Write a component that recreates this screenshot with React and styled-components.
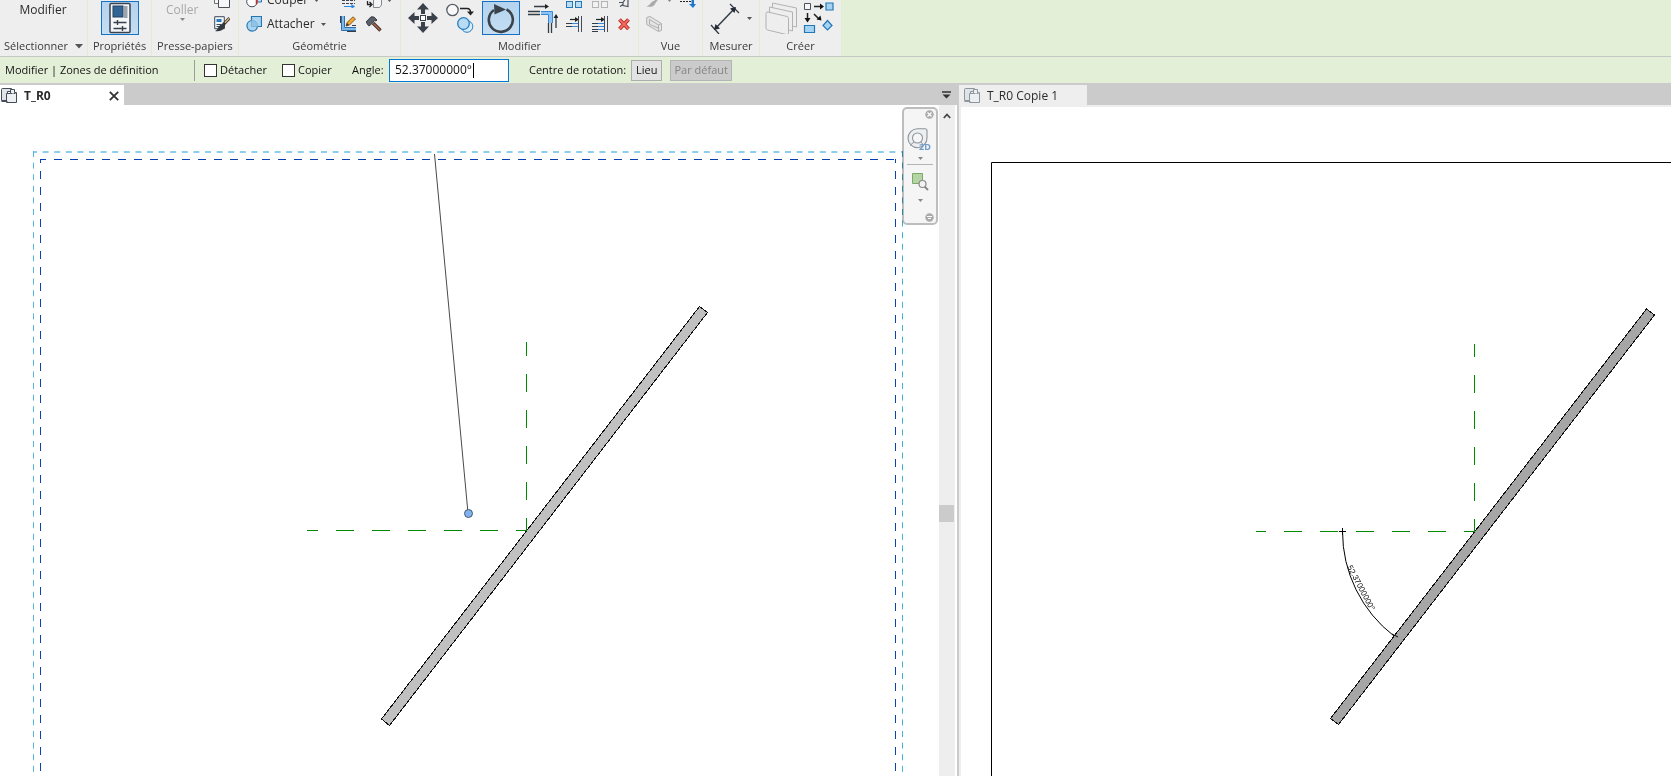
import { useState } from "react";
import styled, { createGlobalStyle } from "styled-components";

const GlobalStyle = createGlobalStyle`
* {
    box-sizing: border-box;
}
body {
    margin: 0;
    overflow: hidden;
    font-family: "Open Sans", "Noto Sans", sans-serif;
    font-size: 11px;
    line-height: 16px;
    color: #2b2b2b;
}
button, input {
    font: inherit;
    color: inherit;
}
svg {
    flex-shrink: 0;
}
`
const Window = styled.div`
height: 100vh;
display: flex;
flex-direction: column;
background: #fff;
`

/* ribbon */
const Ribbon = styled.header`
display: flex;
height: 57px;
flex: none;
overflow: hidden;
background: #e4efd8;
border-bottom: 1px solid #c6c9c3;
`
const Panel = styled.section`
width: ${props => props.$width}px;
display: flex;
flex-direction: column;
background: #eeeeee;
border-right: 1px solid #e2ecd2;
`
const PanelBody = styled.div`
height: 36px;
display: flex;
align-items: flex-end;
justify-content: ${props => props.$center ? 'center' : 'flex-start'};
gap: ${props => props.$gap || 0}px;
padding-left: ${props => props.$left || 0}px;
overflow: hidden;
`
const PanelTitle = styled.div`
height: 20px;
display: flex;
align-items: center;
justify-content: center;
gap: 7px;
white-space: nowrap;
color: #3a3a3a;
`
const Columns = styled.div`
display: flex;
gap: 10px;
`
const Column = styled.div`
display: flex;
flex-direction: column;
align-items: flex-start;
`
const NamedColumn = styled(Column)`
margin-right: 4px;
`
const Tool = styled.button`
height: 24px;
display: flex;
align-items: center;
gap: 5px;
padding: 0;
border: 0;
background: none;
white-space: nowrap;
&:disabled {
    color: #a8a8a8;
}
`
const ToolName = styled.span`
margin-right: 1px;
font-size: 12px;
`
const BigTool = styled(Tool)`
height: 36px;
flex-direction: column;
gap: 0;
justify-content: ${props => props.$text ? 'flex-start' : 'center'};
padding-top: ${props => props.$text ? 2 : 0}px;
`
const ActiveTool = styled(BigTool)`
width: 38px;
height: 34px;
margin-bottom: 1px;
border: 1px solid #1471c4;
background: linear-gradient(#b4d3ee, #c5def3);
`
const MeasureTool = styled(Tool)`
height: 36px;
gap: 7px;
`

/* options bar */
const Options = styled.div`
height: 26px;
flex: none;
display: flex;
align-items: center;
padding-left: 5px;
background: #e4efd8;
color: #111;
white-space: nowrap;
`
const Context = styled.span`
width: 189px;
`
const Rule = styled.span`
width: 1px;
height: 21px;
margin-right: 9px;
background: #9a9f95;
`
const Check = styled.label`
width: ${props => props.$width}px;
display: flex;
align-items: center;
gap: 3px;
`
const Box = styled.input`
appearance: none;
width: 13px;
height: 13px;
margin: 0;
border: 1px solid #333;
background: #fff;
&:checked {
    box-shadow: inset 0 0 0 2px #fff;
    background: #333;
}
`
const AngleLabel = styled.label`
width: 37px;
`
const Field = styled.div`
width: 120px;
height: 23px;
display: flex;
align-items: center;
margin-right: 20px;
padding-left: 5px;
border: 1px solid #0078d7;
background: #fff;
`
const AngleInput = styled.input`
width: 78px;
padding: 0;
border: 0;
outline: 0;
background: none;
font-size: 12px;
`
const TextCursor = styled.span`
width: 1px;
height: 15px;
background: #000;
`
const Center = styled.span`
width: 102px;
`
const Push = styled.button`
height: 21px;
margin-right: 8px;
padding: 0 4px;
border: 1px solid #adadad;
background: #e2e2e2;
&:disabled {
    padding: 0 3px;
    background: #cbcbcb;
    border-color: #b4b4b4;
    color: #848484;
}
`

/* views */
const Views = styled.main`
flex: 1;
min-height: 0;
display: grid;
grid-template-columns: minmax(0, 957fr) minmax(0, 714fr);
`
const View = styled.section`
display: flex;
flex-direction: column;
min-width: 0;
`
const SecondView = styled(View)`
border-left: 2px solid #cbcbcb;
`
const Tabs = styled.div`
height: 22px;
flex: none;
display: flex;
justify-content: space-between;
align-items: center;
padding-top: 2px;
background: #cbcbcb;
`
const Tab = styled.div`
width: ${props => props.$active ? 124 : 128}px;
height: 20px;
display: flex;
align-items: center;
gap: 7px;
padding: 2px 5px 0 ${props => props.$active ? 1 : 5}px;
background: ${props => props.$active ? '#fff' : '#eeeeee'};
font-size: 12px;
font-weight: ${props => props.$active ? 700 : 400};
`
const TabName = styled.span`
flex: 1;
`
const IconButton = styled.button`
display: flex;
padding: 0;
border: 0;
background: none;
`
const TabMenu = styled(IconButton)`
margin-right: 6px;
`
const Body = styled.div`
flex: 1;
min-height: 0;
display: flex;
position: relative;
`
const FramedBody = styled(Body)`
border-top: 2px solid #eeeeee;
border-left: 2px solid #eeeeee;
`
const Sheet = styled.div`
flex: 1;
min-width: 0;
position: relative;
`
const Drawing = styled.svg`
display: block;
width: 100%;
height: 100%;
`
const Scroll = styled.div`
width: 16px;
margin-right: 2px;
display: grid;
grid-template-rows: 22px 378fr 17px 254fr;
background: #eeeeee;
`
const ScrollUp = styled(IconButton)`
align-items: center;
justify-content: center;
`
const Thumb = styled.div`
grid-row: 3;
width: 15px;
background: #cbcbcb;
`
const NavBar = styled.nav`
position: absolute;
top: 2px;
right: 1px;
width: 36px;
height: 118px;
display: flex;
flex-direction: column;
align-items: center;
border: 2px solid #bdbdbd;
border-radius: 5px;
background: #f5f5f5;
mix-blend-mode: multiply;
`
const NavEnd = styled(IconButton)`
align-self: flex-end;
margin: ${props => props.$last ? '11px 2px 0 0' : '1px 2px 0 0'};
`
const NavTool = styled(IconButton)`
flex-direction: column;
align-items: center;
gap: ${props => props.$gap}px;
margin-top: ${props => props.$top}px;
`
const NavRule = styled.span`
width: 26px;
height: 1px;
margin-top: 4px;
background: #b5b5b5;
`

function Svg({ w = 16, h = 16, children, ...rest }) {
    return <svg width={w} height={h} viewBox={`0 0 ${w} ${h}`} fill="none" aria-hidden="true" {...rest}>{children}</svg>
}

function Down({ color = '#555', big }) {
    return big ?
        <Svg w={8} h={5}><path d="M0 0h8L4 4.6z" fill={color} /></Svg> :
        <Svg w={5} h={3}><path d="M0 0h5L2.5 3z" fill={color} /></Svg>
}

function PropertiesIcon() {
    return (
        <Svg w={22} h={32}>
            <rect x="1" y="1.5" width="20" height="29" rx="1" fill="#f5f6f8" stroke="#3b4350" strokeWidth="1.5" />
            <rect x="4" y="4" width="10" height="11" fill="#2f6494" stroke="#243f5e" />
            <rect x="15" y="4" width="3.5" height="12" fill="#9aa2ac" />
            <path d="M4.500 20.500h13M4.500 26.500h13M8.500 18v5M13.500 24v5" stroke="#38414b" strokeWidth="1.400" />
        </Svg>
    )
}

function PagesIcon() {
    return (
        <Svg>
            <path d="M.5 1.500h10v10H.5z" fill="#f7f7f7" stroke="#6b7078" />
            <path d="M4.500 4.500h11v11h-11z" fill="#f7f7f7" stroke="#4b5058" />
        </Svg>
    )
}

function MatchIcon() {
    return (
        <Svg>
            <path d="M.7.7h9.600v12H.7z" fill="#f2f6fa" stroke="#3f4c5a" />
            <path d="M2.500 3h5v3h-5z" fill="#2a78c0" />
            <path d="M2.500 8.500h5M2.500 10.500h3" stroke="#3f4c5a" />
            <path d="M15.500 2 9 9" stroke="#333" strokeWidth="3" />
            <path d="M15.200 2.300 11 6.700" stroke="#e0b273" strokeWidth="1.500" />
            <path d="M9.500 8c2 1 2 3 .5 4.500C8 14.500 5 16 1 15c2-1 2.500-2 3.500-4s3-3.500 5-3z" fill="#33383f" />
        </Svg>
    )
}

function CutIcon() {
    return (
        <Svg>
            <path d="M6 2h9.500v8h-4" fill="#bfdcf0" stroke="#1f77b8" />
            <circle cx="6" cy="9.500" r="5.300" fill="#fff" stroke="#444c55" />
            <path d="M10.500 3v9" stroke="#e02020" strokeWidth="1.500" />
        </Svg>
    )
}

function JoinIcon() {
    return (
        <Svg>
            <path d="M5.500.5h10v10h-4a5.300 5.300 0 1 1-6-6z" fill="#a9d3ee" stroke="#2577b2" strokeWidth="1.200" />
            <path d="M5.500 4.500h1a5 5 0 0 1 5 5v1h-6z" fill="#90c4e6" stroke="#6eacd4" strokeWidth=".7" />
        </Svg>
    )
}

function BeamIcon() {
    return (
        <Svg>
            <path d="M2 8.500h13M2 11.500h13" stroke="#3f464f" strokeDasharray="3 1" />
            <path d="M4 14.500h10M11 12.500l3 2-3 2" stroke="#2c8be0" strokeWidth="1.200" />
        </Svg>
    )
}

function WallIcon() {
    return (
        <Svg>
            <path d="M1.500 0v14.500H16M4.500 0v11.500H16" stroke="#2d6daa" />
            <path d="M3 0v13h13" stroke="#5aa7e3" strokeWidth="1.500" />
            <path d="M.5 0v7M7 15.500h9M12 9.500h4" stroke="#343b45" />
            <path d="m6 10 1-3.500L13 .8 15.500 3 9.500 9z" fill="#f2a52e" stroke="#6b4a20" strokeWidth=".8" />
            <path d="m6 10 1-3 2 2z" fill="#333" />
        </Svg>
    )
}

function FaceIcon() {
    return (
        <Svg>
            <path d="M7.500 6.500 9.500 4h6v9l-2 2.500h-6z" fill="#f4f4f4" stroke="#858a90" />
            <path d="M1.500 9v3.500H5M3.500 10 6 12.500 3.500 15" stroke="#222" strokeWidth="1.300" />
        </Svg>
    )
}

function HammerIcon() {
    return (
        <Svg>
            <path d="m7 7 7.500 7.500" stroke="#4b2f26" strokeWidth="3.400" />
            <path d="m7.500 7.500 6.500 6.500" stroke="#a36a55" strokeWidth="1.400" />
            <path d="M0 6 5 .8l3 .2 3 3-1 1-1.500-.5L4 9.500l-1.500.2z" fill="#596069" stroke="#2f343a" strokeWidth=".9" />
        </Svg>
    )
}

function MoveIcon() {
    return (
        <Svg w={30} h={32}>
            <g fill="#3a414b">
                <path d="m15 1 6 6.500h-4V12h-4V7.500H9zM15 31l6-6.500h-4V20h-4v4.500H9zM0 16l6.500-6v4H11v4H6.500v4zM30 16l-6.500-6v4H19v4h4.500v4z" />
            </g>
            <rect x="12.500" y="13.500" width="5" height="5" fill="#fff" stroke="#3a414b" />
        </Svg>
    )
}

function CopyIcon() {
    return (
        <Svg w={28} h={32}>
            <circle cx="6.500" cy="8" r="5.700" fill="#f8f8f8" stroke="#555c66" strokeWidth="1.300" />
            <path d="M14 6.500h7c2.500 0 3.500 1 3.500 4" stroke="#222" strokeWidth="1.500" />
            <path d="M21 9.500h7l-3.500 4z" fill="#222" />
            <circle cx="21" cy="24.500" r="5.800" fill="#d8ecfa" stroke="#2480c4" />
            <circle cx="17.500" cy="21.500" r="5.800" fill="#b9dcf3" stroke="#2480c4" strokeWidth="1.300" />
        </Svg>
    )
}

function RotateIcon() {
    return (
        <Svg w={30} h={32}>
            <path d="M20.500 7.300A12 12 0 1 1 8 8" stroke="#3b434c" strokeWidth="2.600" />
            <path d="m8 2 12 5.500L8.500 12.500z" fill="#3b434c" />
        </Svg>
    )
}

function TrimIcon() {
    return (
        <Svg w={30} h={32}>
            <path d="M6 4.500h13M0 9.500h12M0 12.500h12" stroke="#343c46" strokeWidth="1.300" />
            <path d="m17 2 4 2.500L17 7z" fill="#222" />
            <path d="M13 11h9.500v10" stroke="#8ec3f2" strokeWidth="4" />
            <path d="M13 9.500h11.500V21M13 12.500h7.500V21" stroke="#3689d8" />
            <path d="M20.500 21v10M23.500 21v10M28 26V14" stroke="#343c46" strokeWidth="1.300" />
            <path d="m25.500 16 2.500-4 2.500 4z" fill="#222" />
        </Svg>
    )
}

function ArrayIcon({ off }) {
    const stroke = off ? '#b3b3b3' : '#2478b8'
    const fill = off ? '#f2f2f2' : '#b8dcf3'
    return (
        <Svg>
            {[2, 10].map(y => [.5, 9.500].map(x =>
                <rect key={x + '-' + y} x={x} y={y - .5} width="6" height="6" fill={fill} stroke={stroke} />))}
        </Svg>
    )
}

function ExtendIcon({ many }) {
    return (
        <Svg>
            <path d="M4 3.500h6" stroke="#222" strokeWidth="1.200" />
            <path d="m9 1 4 2.500L9 6z" fill="#222" />
            <path d="M12.500 0v16M15.500 0v16" stroke="#454c56" />
            <path d="M0 7.500h6M0 10.500h6" stroke="#343c46" />
            <path d="M6 7.500h6M6 10.500h6" stroke="#3689d8" />
            {many && <path d="M0 13.500h6M0 15.500h6" stroke="#343c46" />}
            {many && <path d="M6 13.500h6" stroke="#3689d8" />}
        </Svg>
    )
}

function PinIcon() {
    return <Svg w={12}><path d="M1 10.500h4l2-3M5 10.500v3l5 1v-7M2 14.500l3-2" stroke="#4f555e" strokeWidth="1.200" /></Svg>
}

function DeleteIcon() {
    return (
        <Svg w={12}>
            <path d="m1.500 3.500 9 9.500M10.500 3.500l-9 9.500" stroke="#b3261e" strokeWidth="3.800" />
            <path d="m1.500 3.500 9 9.500M10.500 3.500l-9 9.500" stroke="#f4685f" strokeWidth="2" />
        </Svg>
    )
}

function PaintIcon() {
    return <Svg><path d="M15 2 8 9c-3 0-3 4-7.500 5.500 4 1 8 0 9-3.500L15 4z" fill="#aaa" /></Svg>
}

function HideIcon() {
    return (
        <Svg>
            <path d="M0 9.500h15" stroke="#222" strokeDasharray="2 1" />
            <path d="M11.500 8v4H9l4 4 3-4h-2V8z" fill="#1f78d0" />
        </Svg>
    )
}

function SectionBoxIcon() {
    return (
        <Svg>
            <path d="M.7 1.500 4 .5l11.500 7v7l-3 1L.7 8.500z" fill="#e4e4e4" stroke="#b0b0b0" />
            <path d="m3.500 3.500 9 5.500v6M3.500 3.500v5l9 3.500M12.500 9l3-1.500" stroke="#b0b0b0" />
        </Svg>
    )
}

function MeasureIcon() {
    return (
        <Svg w={30} h={32}>
            <path d="m5 27 20-21" stroke="#343c46" strokeWidth="1.500" />
            <path d="M1 23l8 9M20 2l9 9" stroke="#343c46" strokeWidth="1.300" />
            <path d="m4 28 1.500-6 4.500 4.500zM26 5l-6 1.500 4.500 4.500z" fill="#222a33" />
        </Svg>
    )
}

function GroupIcon() {
    return (
        <Svg w={32} h={32}>
            <g fill="#eeeeee" stroke="#b2b2b2">
                <path d="m7.500 1 24 5v19l-24-6z" />
                <path d="m4.500 5 23 5v19l-23-6z" />
                <path d="M1 11.500q0-2 2-1.500l19 4.500q1.500.5 1.500 2V31q0 2-2 1.500L2.500 28Q1 27.500 1 26z" />
            </g>
        </Svg>
    )
}

function CreateIcon() {
    return (
        <Svg w={31} h={32}>
            <path d="M1.500 1.500h6v6h-6z" fill="#f6f6f6" stroke="#4a525c" />
            <path d="M11 4.500h7M4.500 11v6M11 12l5 5" stroke="#222" strokeWidth="1.500" />
            <path d="m17 1.500 4 3-4 3zM1.500 16h6l-3 4.500zM18.500 18.500l-5-1 4-4z" fill="#111" />
            <path d="M23 1h7v7h-7zM1.500 23.500h10v7h-10zM24.500 18.500l4.500 5-4.500 4.500L20 23.500z" fill="#a6d3f1" stroke="#2478b8" strokeWidth="1.200" />
        </Svg>
    )
}

function PlanIcon({ off }) {
    const stroke = off ? '#8f959d' : '#434b57'
    return (
        <Svg>
            <path d="M.5 12.500V1.500q0-1 1-1h9v3h-4v9z" fill="#dfe4ea" stroke={stroke} />
            <path d="M5.500 14.500v-9h4v-4h4v3h2v10z" fill="#edf0f3" stroke={stroke} />
            <path d="M6.500 5.500h9" stroke={stroke} strokeDasharray="2 1" />
            <path d="M.5 13.500h6" stroke={stroke} />
        </Svg>
    )
}

function RibbonBar() {
    return (
        <Ribbon>
            <Panel $width={88}>
                <PanelBody $center><BigTool $text><ToolName>Modifier</ToolName></BigTool></PanelBody>
                <PanelTitle>Sélectionner <Down big /></PanelTitle>
            </Panel>
            <Panel $width={64}>
                <PanelBody $center><ActiveTool aria-label="Propriétés"><PropertiesIcon /></ActiveTool></PanelBody>
                <PanelTitle>Propriétés</PanelTitle>
            </Panel>
            <Panel $width={87}>
                <PanelBody $left={14} $gap={15}>
                    <BigTool $text disabled><ToolName>Coller</ToolName><Down color="#888" /></BigTool>
                    <Column>
                        <Tool aria-label="Copier dans le presse-papiers"><PagesIcon /></Tool>
                        <Tool aria-label="Copier les propriétés"><MatchIcon /></Tool>
                    </Column>
                </PanelBody>
                <PanelTitle>Presse-papiers</PanelTitle>
            </Panel>
            <Panel $width={162}>
                <PanelBody $left={7} $gap={10}>
                    <NamedColumn>
                        <Tool><CutIcon /><ToolName>Couper</ToolName><Down /></Tool>
                        <Tool><JoinIcon /><ToolName>Attacher</ToolName><Down /></Tool>
                    </NamedColumn>
                    <Column>
                        <Tool aria-label="Grugeage"><BeamIcon /></Tool>
                        <Tool aria-label="Jonctions de murs"><WallIcon /></Tool>
                    </Column>
                    <Column>
                        <Tool aria-label="Scinder la face"><FaceIcon /><Down /></Tool>
                        <Tool aria-label="Démolir"><HammerIcon /></Tool>
                    </Column>
                </PanelBody>
                <PanelTitle>Géométrie</PanelTitle>
            </Panel>
            <Panel $width={238}>
                <PanelBody $left={7} $gap={8}>
                    <BigTool aria-label="Déplacer"><MoveIcon /></BigTool>
                    <BigTool aria-label="Copier"><CopyIcon /></BigTool>
                    <ActiveTool aria-label="Rotation"><RotateIcon /></ActiveTool>
                    <BigTool aria-label="Ajuster"><TrimIcon /></BigTool>
                    <Columns>
                        <Column>
                            <Tool aria-label="Réseau"><ArrayIcon /></Tool>
                            <Tool aria-label="Prolonger un élément"><ExtendIcon /></Tool>
                        </Column>
                        <Column>
                            <Tool aria-label="Grouper" disabled><ArrayIcon off /></Tool>
                            <Tool aria-label="Prolonger plusieurs éléments"><ExtendIcon many /></Tool>
                        </Column>
                        <Column>
                            <Tool aria-label="Verrouiller"><PinIcon /></Tool>
                            <Tool aria-label="Supprimer"><DeleteIcon /></Tool>
                        </Column>
                    </Columns>
                </PanelBody>
                <PanelTitle>Modifier</PanelTitle>
            </Panel>
            <Panel $width={64}>
                <PanelBody $left={7} $gap={8}>
                    <Column>
                        <Tool aria-label="Peindre" disabled><PaintIcon /><Down color="#888" /></Tool>
                        <Tool aria-label="Zone de coupe" disabled><SectionBoxIcon /></Tool>
                    </Column>
                    <Column>
                        <Tool aria-label="Masquer"><HideIcon /></Tool>
                        <Tool as="span" />
                    </Column>
                </PanelBody>
                <PanelTitle>Vue</PanelTitle>
            </Panel>
            <Panel $width={57}>
                <PanelBody $left={7}>
                    <MeasureTool aria-label="Mesurer"><MeasureIcon /><Down /></MeasureTool>
                </PanelBody>
                <PanelTitle>Mesurer</PanelTitle>
            </Panel>
            <Panel $width={82}>
                <PanelBody $left={5} $gap={6}>
                    <BigTool aria-label="Créer un groupe" disabled><GroupIcon /></BigTool>
                    <BigTool aria-label="Créer un ensemble"><CreateIcon /></BigTool>
                </PanelBody>
                <PanelTitle>Créer</PanelTitle>
            </Panel>
        </Ribbon>
    )
}

function OptionsBar() {
    const [angle, setAngle] = useState('52.37000000°')
    return (
        <Options>
            <Context>Modifier | Zones de définition</Context>
            <Rule />
            <Check $width={78}><Box type="checkbox" />Détacher</Check>
            <Check $width={70}><Box type="checkbox" />Copier</Check>
            <AngleLabel htmlFor="angle">Angle:</AngleLabel>
            <Field>
                <AngleInput id="angle" value={angle} onChange={e => setAngle(e.target.value)} />
                <TextCursor />
            </Field>
            <Center>Centre de rotation:</Center>
            <Push>Lieu</Push>
            <Push disabled>Par défaut</Push>
        </Options>
    )
}

function Navigation() {
    return (
        <NavBar aria-label="Navigation">
            <NavEnd aria-label="Fermer">
                <Svg w={9} h={9}><circle cx="4.500" cy="4.500" r="4.200" fill="#aaa" /><path d="m2.500 2.500 4 4m0-4-4 4" stroke="#fff" strokeWidth="1.200" /></Svg>
            </NavEnd>
            <NavTool $top={9} $gap={4} aria-label="Disque de navigation 2D">
                <Svg w={26} h={25}>
                    <path d="M10 .7h8q2 0 2 2V10A9.500 9.500 0 1 1 10 .7z" fill="#eceef0" stroke="#8d949c" strokeWidth="1.100" />
                    <circle cx="10.500" cy="10" r="5" fill="#f6f6f6" stroke="#8d949c" strokeWidth="1.100" />
                    <path d="m7 14-3.500 3M14 14l2.500 3" stroke="#8d949c" />
                    <text x="12" y="22" fontSize="9" fontWeight="700" fill="#6c9dcb">2D</text>
                </Svg>
                <Down color="#888" />
            </NavTool>
            <NavRule />
            <NavTool $top={7} $gap={7} aria-label="Zoom sur une zone">
                <Svg w={18} h={20}>
                    <path d="M1.500 1.500h10v10h-10z" fill="#b5d3a4" stroke="#7ba968" />
                    <path d="m13 14 4 4" stroke="#8a8a8a" strokeWidth="2" />
                    <circle cx="11.500" cy="12" r="3.500" fill="#f3f3f3" stroke="#8a8a8a" strokeWidth="1.200" />
                </Svg>
                <Down color="#888" />
            </NavTool>
            <NavEnd $last aria-label="Options">
                <Svg w={9} h={9}><circle cx="4.500" cy="4.500" r="4.200" fill="#aaa" /><path d="M2 3.500h5M3 5.500h3" stroke="#fff" /></Svg>
            </NavEnd>
        </NavBar>
    )
}

function PlanDrawing() {
    return (
        <Drawing>
            <g strokeDasharray="6 5.600" fill="none">
                <path d="M33 47H902" stroke="#8bcfea" strokeWidth="2" strokeDashoffset="2" />
                <path d="M33.500 46V671" stroke="#58b4da" />
                <path d="M902.500 46V671" stroke="#3fb2dc" />
            </g>
            <g strokeDasharray="8 8" stroke="#0a3fb0" fill="none">
                <path d="M40 54.500H896" strokeDashoffset="2" />
                <path d="M40.500 54V671M895.500 54V671" strokeDashoffset="4" />
            </g>
            <path d="M434.500 49 468 408" stroke="#4a4a4a" />
            <circle cx="468.500" cy="408.500" r="4" fill="#7eb2f2" stroke="#4a5a6a" />
            <path d="M381.500 614 699.500 201.500 707.500 207.500 389.500 620.500z" fill="#c0c0c0" stroke="#111" shapeRendering="crispEdges" />
            <g strokeDasharray="18 18" stroke="#008a00">
                <path d="M527 425.500H307" strokeDashoffset="7" />
                <path d="M526.500 426V237" strokeDashoffset="5" />
            </g>
        </Drawing>
    )
}

function CopyDrawing() {
    return (
        <Drawing>
            <path d="M30.500 700V55.500H1200" fill="none" stroke="#000" />
            <path d="M369.500 611.500 685.500 202 693.500 208 377.500 617.500z" fill="#a6a6a6" stroke="#111" shapeRendering="crispEdges" />
            <g strokeDasharray="18 18" stroke="#008a00">
                <path d="M514 424.500H295" strokeDashoffset="7" />
                <path d="M513.500 425V237" strokeDashoffset="5" />
            </g>
            <path d="M381.500 424.500A132 132 0 0 0 433 529" fill="none" stroke="#000" />
            <path d="M378 424.500h7M381.500 421v7M431 527l6 3" stroke="#000" />
            <text transform="translate(386 460) rotate(62)" fontFamily='"Liberation Sans", sans-serif' fontSize="8" fill="#000">52.37000000°</text>
        </Drawing>
    )
}

function App() {
    return (
        <Window>
            <GlobalStyle />
            <RibbonBar />
            <OptionsBar />
            <Views>
                <View>
                    <Tabs>
                        <Tab $active>
                            <PlanIcon /><TabName>T_R0</TabName>
                            <IconButton aria-label="Fermer T_R0">
                                <Svg w={10} h={10}><path d="m.8.8 8.400 8.400m0-8.400L.8 9.200" stroke="#333" strokeWidth="1.800" /></Svg>
                            </IconButton>
                        </Tab>
                        <TabMenu aria-label="Liste des vues">
                            <Svg w={9} h={8}><path d="M0 1h9" stroke="#333" strokeWidth="1.500" /><path d="M.5 3.500h8l-4 4z" fill="#333" /></Svg>
                        </TabMenu>
                    </Tabs>
                    <Body>
                        <Sheet>
                            <PlanDrawing />
                            <Navigation />
                        </Sheet>
                        <Scroll>
                            <ScrollUp aria-label="Défiler vers le haut">
                                <Svg w={8} h={6}><path d="m.8 5 3.200-3.500L7.200 5" stroke="#444" strokeWidth="1.800" /></Svg>
                            </ScrollUp>
                            <Thumb />
                        </Scroll>
                    </Body>
                </View>
                <SecondView>
                    <Tabs>
                        <Tab><PlanIcon off /><TabName>T_R0 Copie 1</TabName></Tab>
                    </Tabs>
                    <FramedBody>
                        <CopyDrawing />
                    </FramedBody>
                </SecondView>
            </Views>
        </Window>
    );
}

export default App;
